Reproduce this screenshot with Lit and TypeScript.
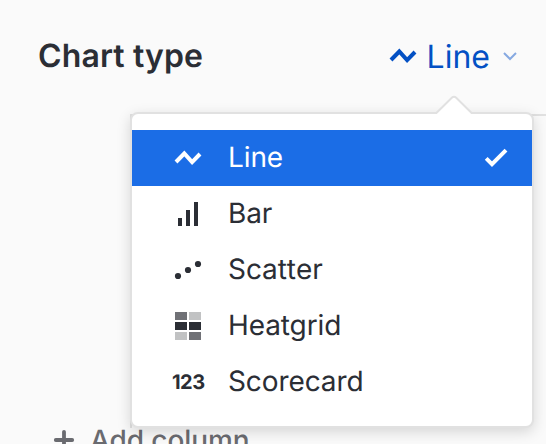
import { LitElement, html, css, svg } from "lit";
import { customElement, property, state } from "lit/decorators.js";
import { classMap } from "lit/directives/class-map.js";

type Kind = "line" | "bar" | "scatter" | "heatgrid" | "scorecard";

const OPTIONS: { kind: Kind; label: string }[] = [
  { kind: "line", label: "Line" },
  { kind: "bar", label: "Bar" },
  { kind: "scatter", label: "Scatter" },
  { kind: "heatgrid", label: "Heatgrid" },
  { kind: "scorecard", label: "Scorecard" },
];

@customElement("chart-icon")
class ChartIcon extends LitElement {
  @property() kind: Kind = "line";

  static styles = css`
    :host { display: flex; width: 32px; height: 32px; }
    svg { display: block; width: 32px; height: 32px; overflow: visible; }
    .number {
      width: 32px; text-align: center; white-space: nowrap;
      font: 700 20px/33px Inter, sans-serif; letter-spacing: -0.5px;
    }
  `;

  private shape() {
    switch (this.kind) {
      case "line":
        return svg`<path d="M4 20L12.3 11.5L20.1 20.1L28 12" fill="none" stroke="currentColor" stroke-width="4"/>`;
      case "bar":
        return svg`<path d="M6 20h4v8H6zM14 12h4v16h-4zM22 4h4v24h-4z" fill="currentColor"/>`;
      case "scatter":
        return svg`<g fill="currentColor"><circle cx="6" cy="22" r="3.1"/><circle cx="16" cy="16" r="3.1"/><circle cx="26" cy="10" r="3.1"/></g>`;
      default:
        return svg`<path d="M3 12h12v8H3zM17 12h12v8H17z" fill="#2b2e35"/>
          <path d="M3 2h12v8H3zM17 22h12v8H17z" fill="#707176"/>
          <path d="M17 2h12v8H17zM3 22h12v8H3z" fill="#c1c2c3"/>`;
    }
  }

  render() {
    return this.kind === "scorecard"
      ? html`<span class="number">123</span>`
      : html`<svg viewBox="0 0 32 32">${this.shape()}</svg>`;
  }
}

@customElement("chart-type-menu")
class ChartTypeMenu extends LitElement {
  @property() selected: Kind = "line";

  static styles = css`
    :host {
      display: block; box-sizing: border-box; width: 404px; padding: 16px 0;
      background: #fff; border: 2px solid #e1e1e1; border-radius: 8px;
      box-shadow: 0 4px 14px rgba(0, 0, 0, 0.15);
    }
    .pointer { position: absolute; left: 302px; top: -19px; width: 40px; height: 21px; }
    .item {
      display: flex; align-items: center; height: 56px; box-sizing: border-box;
      padding: 0 20px 0 40px; color: #2b2e35; cursor: pointer;
      font: 370 28px/54px Inter, sans-serif; letter-spacing: -0.1px;
    }
    .item.selected { background: #1b6de6; color: #fff; }
    .scatter { font-kerning: none; letter-spacing: 0; }
    .label { flex: 1; height: 56px; margin-left: 24px; }
    .check { width: 32px; height: 32px; }
  `;

  render() {
    return html`
      <svg class="pointer" viewBox="0 0 40 21">
        <path d="M0 21V19L2 19L18 3Q20 1 22 3L38 19H40V21Z" fill="#fff"/>
        <path d="M0 18H2.4L17.8 2.8Q20 .7 22.2 2.8L37.6 18H40" fill="none" stroke="#e1e1e1" stroke-width="2"/>
      </svg>
      ${OPTIONS.map(({ kind, label }) => html`
        <div class=${classMap({ item: true, [kind]: true, selected: kind === this.selected })}>
          <chart-icon .kind=${kind}></chart-icon>
          <span class="label">${label}</span>
          ${kind === this.selected
            ? html`<svg class="check" viewBox="0 0 32 32"><path d="M6.2 16.4L12 22.2L26 8.2" fill="none" stroke="currentColor" stroke-width="4"/></svg>`
            : ""}
        </div>`)}
    `;
  }
}

@customElement("app-root")
class AppRoot extends LitElement {
  @state() private selected: Kind = "line";

  static styles = css`
    :host {
      display: flex; flex-direction: column; position: relative; overflow: hidden;
      box-sizing: border-box; width: 546px; height: 444px; background: #fafafa;
      font-family: Inter, sans-serif; color: #2b2e35;
      text-rendering: geometricPrecision;
    }
    .header {
      display: flex; align-items: center; justify-content: space-between;
      height: 114px; box-sizing: border-box; padding: 0 26px 2px 38px; flex: none;
    }
    .title { font-size: 32px; font-weight: 600; line-height: 40px; letter-spacing: 0.12px; }
    .trigger {
      display: flex; align-items: center; color: #0350c4;
      font-size: 32px; font-weight: 370; line-height: 40px;
    }
    .value { margin: 2px 10px 0 8px; }
    .chevron { width: 20px; height: 20px; color: #86a9e1; }
    .field {
      flex: none; height: 314px; margin-left: 130px; box-sizing: border-box;
      border-top: 2px solid #e1e1e1; border-left: 2px solid #e1e1e1;
    }
    .add {
      display: flex; align-items: center; flex: none; height: 36px;
      margin: -6px 0 0 52px; color: #6a6b70;
      font-size: 28px; font-weight: 500; line-height: 36px; letter-spacing: -0.1px;
    }
    .plus { width: 24px; height: 24px; margin-right: 14px; }
    chart-type-menu { position: absolute; left: 130px; top: 112px; }
  `;

  render() {
    return html`
      <div class="header">
        <span class="title">Chart type</span>
        <div class="trigger">
          <chart-icon .kind=${this.selected}></chart-icon>
          <span class="value">Line</span>
          <svg class="chevron" viewBox="0 0 20 20"><path d="M4 7L10 13L16 7" fill="none" stroke="currentColor" stroke-width="2"/></svg>
        </div>
      </div>
      <div class="field"></div>
      <div class="add">
        <svg class="plus" viewBox="0 0 24 24"><path d="M12 3.8V20.2M3.8 12H20.2" fill="none" stroke="currentColor" stroke-width="3.8" stroke-linecap="round"/></svg>
        <span>Add column</span>
      </div>
      <chart-type-menu .selected=${this.selected}></chart-type-menu>
    `;
  }
}
